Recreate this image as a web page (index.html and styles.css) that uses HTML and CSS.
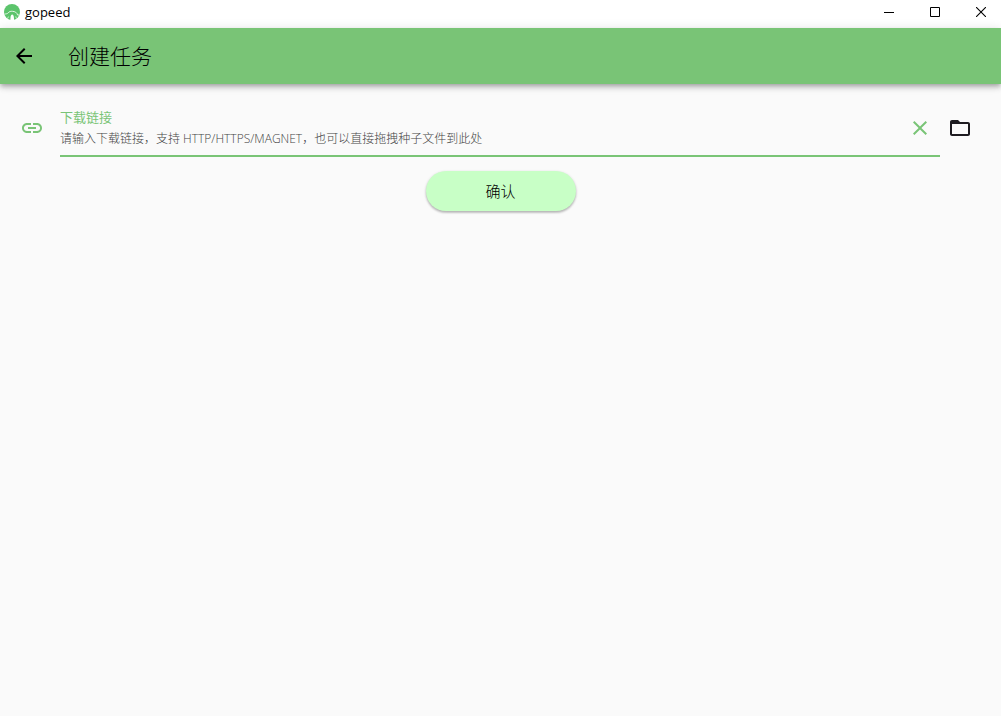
FILE: index.html
```html
<!DOCTYPE html>
<html lang="zh-CN">
<head>
  <meta charset="utf-8">
  <title>gopeed</title>
  <link rel="stylesheet" href="styles.css">
</head>
<body>
  <div class="titlebar">
    <svg class="logo" width="16" height="16" viewBox="0 0 16 16">
      <circle cx="8" cy="8" r="8" fill="#5cc46c"/>
      <path d="M0.5 10.2 C2.5 9.6 3.2 10 4.2 8.8 C5.4 7.4 6.8 7.2 8.4 7.3 C11 7.4 13 8.6 13.6 11 L15.6 11" fill="none" stroke="#e6f7e8" stroke-width="1"/>
      <path d="M6.4 16 C6.4 13.5 6.6 10.8 8.2 10.6 C9.8 10.8 10 13.5 10 16 Z" fill="#fff"/>
      <path d="M3.6 14.6 L4.4 12.6 M12.4 14.4 L11.8 12.4" stroke="#c9efce" stroke-width="1"/>
    </svg>
    <span class="app-name">gopeed</span>
    <div class="window-buttons">
      <button type="button" aria-label="最小化">
        <svg width="10" height="10" viewBox="0 0 10 10"><path d="M0 5.5H10" stroke="#000"/></svg>
      </button>
      <button type="button" aria-label="最大化">
        <svg width="10" height="10" viewBox="0 0 10 10"><path d="M0.5 0.5H9.5V9.5H0.5Z" fill="none" stroke="#000"/></svg>
      </button>
      <button type="button" aria-label="关闭">
        <svg width="10" height="10" viewBox="0 0 10 10"><path d="M0 0L10 10M10 0L0 10" stroke="#000" stroke-width="1.1"/></svg>
      </button>
    </div>
  </div>

  <header class="appbar">
    <button type="button" class="icon-button" aria-label="返回">
      <svg width="24" height="24" viewBox="0 0 24 24"><path d="M20 11H7.83l5.59-5.59L12 4l-8 8 8 8 1.41-1.41L7.83 13H20v-2z"/></svg>
    </button>
    <h1>创建任务</h1>
  </header>

  <form class="create-form">
    <div class="url-row">
      <svg class="link-icon" width="24" height="24" viewBox="0 0 24 24"><path d="M3.9 12c0-1.71 1.39-3.1 3.1-3.1h4V7H7c-2.76 0-5 2.24-5 5s2.24 5 5 5h4v-1.9H7c-1.71 0-3.1-1.39-3.1-3.1zM8 13h8v-2H8v2zm9-6h-4v1.9h4c1.71 0 3.1 1.39 3.1 3.1s-1.39 3.1-3.1 3.1h-4V17h4c2.76 0 5-2.24 5-5s-2.24-5-5-5z"/></svg>
      <div class="field">
        <div class="field-text">
          <label for="url">下载链接</label>
          <input type="text" id="url" placeholder="请输入下载链接，支持 HTTP/HTTPS/MAGNET，也可以直接拖拽种子文件到此处">
        </div>
        <button type="button" class="icon-button clear" aria-label="清除">
          <svg width="24" height="24" viewBox="0 0 24 24"><path d="M19 6.41L17.59 5 12 10.59 6.41 5 5 6.41 10.59 12 5 17.59 6.41 19 12 13.41 17.59 19 19 17.59 13.41 12z"/></svg>
        </button>
      </div>
      <button type="button" class="icon-button folder" aria-label="选择种子文件">
        <svg width="24" height="24" viewBox="0 0 24 24"><path d="M20 6h-8l-2-2H4c-1.1 0-1.99.9-1.99 2L2 18c0 1.1.9 2 2 2h16c1.1 0 2-.9 2-2V8c0-1.1-.9-2-2-2zm0 12H4V8h16v10z"/></svg>
      </button>
    </div>
    <button type="submit" class="confirm">确认</button>
  </form>
</body>
</html>
```

FILE: styles.css
```css
* {
  box-sizing: border-box;
}

body {
  margin: 0;
  background: #fafafa;
  color: #000;
  font-family: "Open Sans", "Noto Sans CJK SC", sans-serif;
  font-weight: 300;
}

button {
  border: none;
  padding: 0;
  background: none;
  font: inherit;
  color: inherit;
}

svg {
  display: block;
}

/* window title bar */
.titlebar {
  display: flex;
  align-items: center;
  height: 28px;
  padding: 0 0 4px 4px;
  background: #fff;
}

.app-name {
  margin-left: 5px;
  font-size: 13px;
  font-weight: 400;
}

.window-buttons {
  display: flex;
  height: 100%;
  margin-left: auto;
}

.window-buttons button {
  display: flex;
  align-items: center;
  justify-content: center;
  width: 46px;
  padding-left: 6px;
}

.appbar {
  display: flex;
  align-items: center;
  gap: 32px;
  height: 56px;
  padding: 0 12px;
  background: #79c476;
  box-shadow: 0 2px 4px -1px rgba(0, 0, 0, 0.2), 0 4px 5px rgba(0, 0, 0, 0.14), 0 1px 10px rgba(0, 0, 0, 0.12);
}

.appbar h1 {
  margin: 0;
  padding-bottom: 2px;
  font-size: 21px;
  font-weight: 300;
}

.icon-button {
  flex: none;
}

/* task form */
.create-form {
  padding: 15px 20px;
}

.url-row {
  display: flex;
  align-items: center;
  gap: 8px;
  padding-right: 9px;
}

.link-icon {
  flex: none;
  margin-right: 8px;
  fill: #79c476;
}

.field {
  display: flex;
  flex: 1;
  align-items: center;
  height: 58px;
  padding: 2px 8px 0 0;
  border-bottom: 2px solid #79c476;
}

.field-text {
  flex: 1;
}

.field label {
  display: block;
  color: #79c476;
  font-size: 13px;
  font-weight: 400;
  line-height: 20px;
}

.field input {
  display: block;
  width: 100%;
  height: 22px;
  padding: 0;
  border: none;
  outline: none;
  background: none;
  font: inherit;
  font-size: 12px;
}

.field input::placeholder {
  color: #444;
  opacity: 1;
}

.clear {
  fill: #79c476;
}

.folder {
  fill: #1d1b20;
}

.confirm {
  display: block;
  width: 150px;
  height: 40px;
  margin: 14px auto 0;
  padding-bottom: 2px;
  border-radius: 20px;
  background: #c8ffc6;
  font-size: 15px;
  box-shadow: 0 1px 3px rgba(0, 0, 0, 0.2), 0 2px 2px rgba(0, 0, 0, 0.14);
}
```
